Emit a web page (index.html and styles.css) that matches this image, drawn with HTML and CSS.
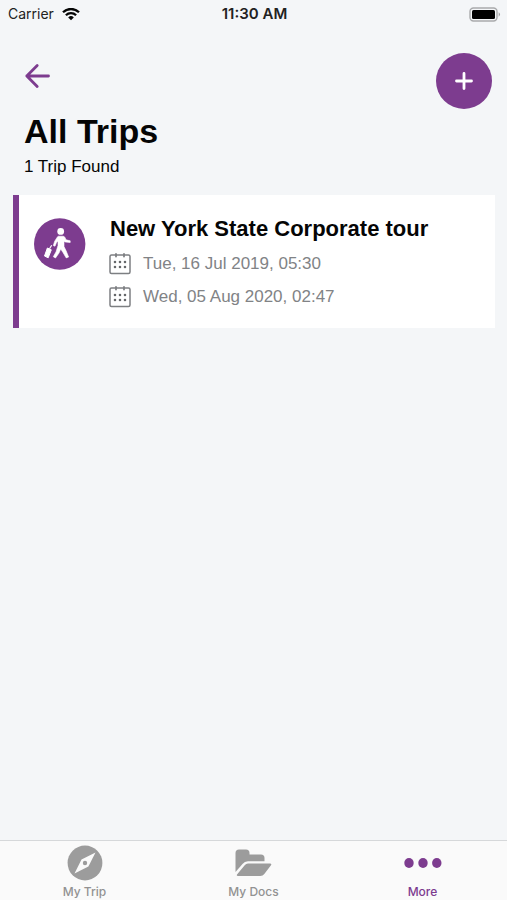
FILE: index.html
```html
<!DOCTYPE html>
<html lang="en">
<head>
<meta charset="utf-8">
<meta name="viewport" content="width=device-width, initial-scale=1">
<title>All Trips</title>
<link rel="stylesheet" href="styles.css">
</head>
<body>
<div class="status">
  <div class="status-left">
    <span>Carrier</span>
    <svg class="wifi" width="18" height="13" viewBox="0 0 18 13" aria-hidden="true">
      <g fill="none" stroke="#050505" stroke-width="2.3"><path d="M1 4.300a11.300 11.300 0 0 1 16 0"/><path d="M3.900 7.300a7.200 7.200 0 0 1 10.200 0"/></g>
      <path d="M9 12.300l-2.800-2.900a4 4 0 0 1 5.600 0z" fill="#050505"/>
    </svg>
  </div>
  <span class="time">11:30 AM</span>
  <svg class="battery" width="32" height="15" viewBox="0 0 32 15" aria-hidden="true">
    <rect x="1" y="1" width="27" height="13" rx="3.500" fill="#f4f6f8" stroke="#a9aaac" stroke-width="1.400"/>
    <rect x="3" y="3" width="23" height="9" rx="1.500" fill="#000"/>
    <path d="M29.700 5.300q2.600 2.200 0 4.400z" fill="#a0a1a3"/>
  </svg>
</div>
<header class="header">
  <div class="actions">
    <button class="back" type="button" aria-label="Back">
      <svg width="26" height="26" viewBox="0 0 26 26"><path d="M24.500 13H2.800M13.200 2.500L2.800 13l10.400 10.500" fill="none" stroke="#7d3c8f" stroke-width="2.800" stroke-linecap="round" stroke-linejoin="round"/></svg>
    </button>
    <button class="add" type="button" aria-label="Add trip">
      <svg width="18" height="18" viewBox="0 0 18 18"><path d="M9 1.500v15M1.500 9h15" stroke="#fff" stroke-width="2.800" stroke-linecap="round"/></svg>
    </button>
  </div>
  <h1>All Trips</h1>
  <p class="count">1 Trip Found</p>
</header>
<main>
  <article class="card">
    <svg class="traveller" width="52" height="52" viewBox="0 0 52 52" aria-hidden="true">
      <circle cx="25.700" cy="26" r="25.700" fill="#7d3c8f"/>
      <circle cx="26.700" cy="13.400" r="3.400" fill="#fff"/>
      <path d="M24.500 18.200h4.500q1.300 0 2 1.400l1 2.200 4.200 1v1.700l-5.400-.6-.8-1v5.600l2.200 4.500 2.400 6-2.400.9-3.200-5.400-2.300-3.500-1.700 4-3.500 5-2.200-1.300 2.700-4.800 2-6.400v-4.500l-1.600 1.800-1.400 3.400-1.700-.7 1.400-4.300 2.700-4.200q.5-.8 1.100-.8z" fill="#fff" stroke="#fff" stroke-width=".6" stroke-linejoin="round"/>
      <path d="M13.400 30l3.900 1.800-3.100 8-3.700-1.800z" fill="#fff" stroke="#fff" stroke-linejoin="round"/>
      <path d="M15.500 30.800l2.200-3.600" stroke="#fff" stroke-width="1.200"/>
    </svg>
    <div class="details">
      <h2>New York State Corporate tour</h2>
      <p class="date"><svg class="calendar" width="22" height="22" viewBox="0 0 22 22" aria-hidden="true"><use href="#cal"/></svg><time datetime="2019-07-16T05:30">Tue, 16 Jul 2019, 05:30</time></p>
      <p class="date"><svg class="calendar" width="22" height="22" viewBox="0 0 22 22" aria-hidden="true"><g id="cal"><rect x="1" y="2" width="20" height="18.500" rx="1.500" fill="none" stroke="#7d7f82" stroke-width="1.500"/><path d="M7 .9v2.600M15 .9v2.600" stroke="#7d7f82" stroke-width="1.800" stroke-linecap="round"/><path d="M6 9h.01M11 9h.01M16 9h.01M6 14h.01M11 14h.01M16 14h.01" stroke="#65676a" stroke-width="2.600" stroke-linecap="round"/></g></svg><time datetime="2020-08-05T02:47">Wed, 05 Aug 2020, 02:47</time></p>
    </div>
  </article>
</main>
<nav class="tabs">
  <a href="#trip"><svg width="38" height="36" viewBox="0 0 38 36" aria-hidden="true"><circle cx="19" cy="18" r="17.400" fill="#9c9c9c"/><path d="M29.500 7.500L22.400 21.500 8.500 28.500l7-14z" fill="#fafafa"/><circle cx="19" cy="18" r="2.200" fill="#9c9c9c"/></svg><span>My Trip</span></a>
  <a href="#docs"><svg width="38" height="36" viewBox="0 0 38 36" aria-hidden="true"><path d="M.5 27V8q0-3.500 3.500-3.500h7Q14.500 4.500 14.500 8v1.500h11.500q3.500 0 3.500 3.500v3.300H13q-3.500 0-5.500 2.700z" fill="#9c9c9c"/><path d="M13 18.500h22q2.200 0 .8 2l-6.500 8.500q-1.500 2-4 2H3q-2 0-.8-1.800l7.500-9q1.300-1.700 3.300-1.700z" fill="#9c9c9c"/></svg><span>My Docs</span></a>
  <a class="active" href="#more" aria-current="page"><svg width="38" height="36" viewBox="0 0 38 36" aria-hidden="true"><g fill="#7d3c8f"><ellipse cx="5" cy="18" rx="4.700" ry="5"/><ellipse cx="19" cy="18" rx="4.700" ry="5"/><ellipse cx="32.800" cy="18" rx="4.700" ry="5"/></g></svg><span>More</span></a>
</nav>
</body>
</html>
```
FILE: styles.css
```css
* { box-sizing: border-box; }
body {
  margin: 0;
  min-height: 100vh;
  display: flex;
  flex-direction: column;
  background: #f4f6f8;
  color: #050505;
  font-family: "Liberation Sans", Arial, sans-serif;
}
h1, h2, p { margin: 0; }
button { border: 0; padding: 0; background: none; cursor: pointer; }
svg { display: block; flex: none; }
.status {
  height: 28px;
  padding: 0 6px 0 8px;
  display: grid;
  grid-template-columns: 1fr auto 1fr;
  align-items: center;
  font: 14px/20px Inter, sans-serif;
  color: #222;
}
.status-left { display: flex; align-items: center; gap: 8px; }
.time { font-size: 15px; font-weight: 600; }
.battery { justify-self: end; }
.header { padding: 25px 15px 0 24px; }
.actions { display: flex; justify-content: space-between; align-items: flex-start; height: 56px; }
.back { margin-top: 10px; }
.add {
  width: 56px;
  height: 56px;
  border-radius: 50%;
  background: #7d3c8f;
  display: flex;
  align-items: center;
  justify-content: center;
}
h1 { font-size: 34px; line-height: 44px; }
.count { font-size: 17px; line-height: 28px; }
main { flex: 1; padding: 14px 12px 14px 13px; }
.card {
  display: flex;
  gap: 23px;
  padding: 20px 16px 15px 15px;
  border-left: 6px solid #7d3c8f;
  background: #fff;
}
.traveller { margin-top: 3px; }
h2 { font-size: 22px; line-height: 28px; padding-left: 1px; }
.details { display: flex; flex-direction: column; }
.date {
  height: 33px;
  display: flex;
  align-items: center;
  gap: 12px;
  font-size: 17px;
  line-height: 24px;
  color: #818386;
}
.date:first-of-type { margin-top: 4px; }
.tabs {
  display: grid;
  grid-template-columns: repeat(3, 1fr);
  height: 60px;
  border-top: 1px solid #d6d8da;
  background: #fafafa;
}
.tabs a {
  display: flex;
  flex-direction: column;
  align-items: center;
  padding-top: 4px;
  gap: 3px;
  color: #929292;
  font: 500 12px/16px Inter, sans-serif;
  text-decoration: none;
}
.tabs .active { color: #7d3c8f; }
```
